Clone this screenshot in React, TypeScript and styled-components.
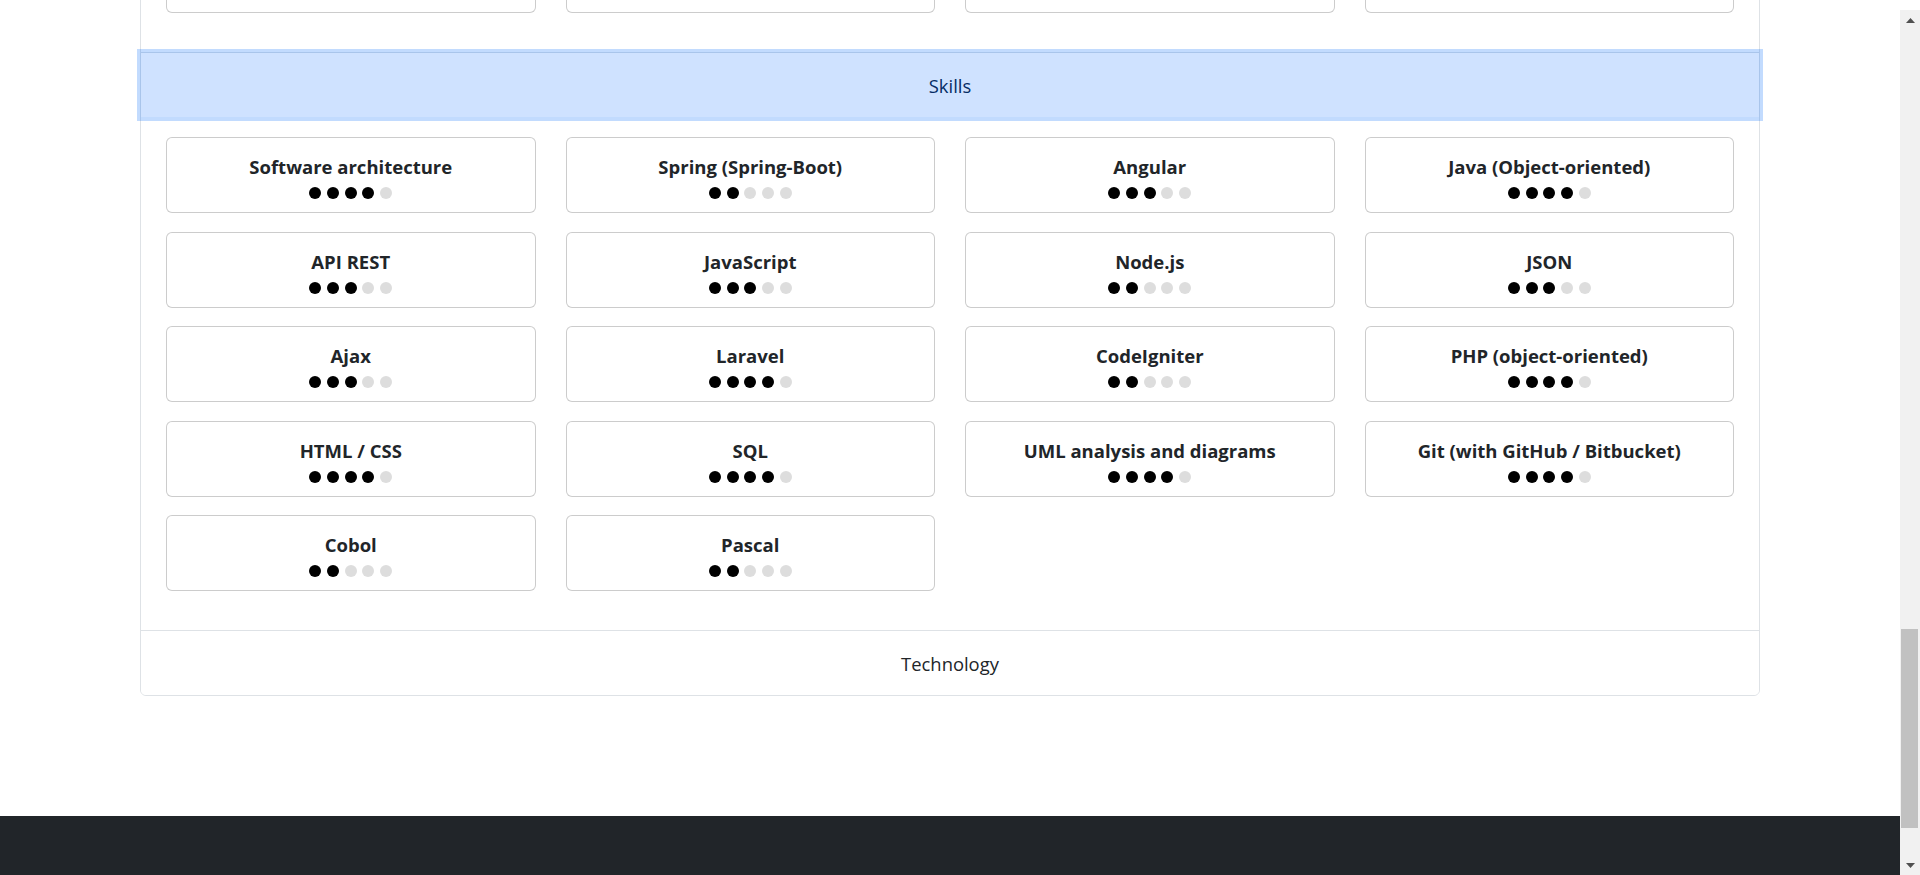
import React from 'react';
import styled, { createGlobalStyle } from 'styled-components';

interface Skill {
  name: string;
  level: number;
}

const SKILLS: Skill[] = [
  { name: 'Software architecture', level: 4 },
  { name: 'Spring (Spring-Boot)', level: 2 },
  { name: 'Angular', level: 3 },
  { name: 'Java (Object-oriented)', level: 4 },
  { name: 'API REST', level: 3 },
  { name: 'JavaScript', level: 3 },
  { name: 'Node.js', level: 2 },
  { name: 'JSON', level: 3 },
  { name: 'Ajax', level: 3 },
  { name: 'Laravel', level: 4 },
  { name: 'CodeIgniter', level: 2 },
  { name: 'PHP (object-oriented)', level: 4 },
  { name: 'HTML / CSS', level: 4 },
  { name: 'SQL', level: 4 },
  { name: 'UML analysis and diagrams', level: 4 },
  { name: 'Git (with GitHub / Bitbucket)', level: 4 },
  { name: 'Cobol', level: 2 },
  { name: 'Pascal', level: 2 },
];

const MAX_LEVEL = 5;

const GlobalStyle = createGlobalStyle`
  html, body {
    margin: 0;
    padding: 0;
    height: 100%;
    overflow: hidden;
    background: #fff;
  }

  body {
    font-family: "Open Sans", "Noto Sans", "Liberation Sans", sans-serif;
    color: #212529;
  }

  *, *::before, *::after {
    box-sizing: border-box;
  }
`;

const Screen = styled.div`
  display: flex;
  height: 875px;
`;

const Main = styled.main`
  flex: 1;
  min-width: 0;
  display: flex;
  flex-direction: column;
  overflow: hidden;
`;

// the page is scrolled down: the accordion starts above the window
const Accordion = styled.div`
  flex-shrink: 0;
  margin: -84px 140px 120px;
  border: 1px solid #dee2e6;
  border-radius: 6px;
`;

const Item = styled.section`
  & + & {
    border-top: 1px solid #dee2e6;
  }
`;

const HeaderButton = styled.button<{ $open?: boolean; $focused?: boolean; $last?: boolean }>`
  position: relative;
  z-index: ${(p) => (p.$focused ? 3 : 'auto')};
  display: flex;
  align-items: center;
  justify-content: center;
  width: 100%;
  height: 64px;
  margin: 0;
  padding: 0 20px;
  border: 0;
  border-radius: ${(p) => (p.$last ? '0 0 5px 5px' : '0')};
  font-family: inherit;
  font-size: 18.4px;
  font-weight: 400;
  background: ${(p) => (p.$open ? '#cfe2ff' : '#fff')};
  color: ${(p) => (p.$open ? '#052c65' : '#212529')};
  box-shadow: ${(p) => (p.$focused ? '0 0 0 4px rgba(13, 110, 253, 0.25)' : 'none')};
  cursor: pointer;
  outline: none;
`;

const Body = styled.div`
  padding: 20px 25px 39px;
`;

const Grid = styled.div`
  display: grid;
  grid-template-columns: repeat(4, minmax(0, 1fr));
  column-gap: 30px;
  row-gap: 18.5px;
`;

const SkillCard = styled.div`
  height: 76px;
  padding: 17px 12px 0;
  border: 1px solid rgba(0, 0, 0, 0.2);
  border-radius: 6px;
  text-align: center;
  background: #fff;
`;

const SkillName = styled.div`
  font-size: 18.5px;
  font-weight: 700;
  line-height: 24px;
  color: #212529;
  white-space: nowrap;
`;

const Dots = styled.div`
  display: flex;
  justify-content: center;
  gap: 5.7px;
  margin-top: 8px;
`;

const Dot = styled.span<{ $on: boolean }>`
  width: 12px;
  height: 12px;
  border-radius: 50%;
  background: ${(p) => (p.$on ? '#000' : '#ddd')};
`;

const Footer = styled.footer`
  flex-shrink: 0;
  height: 200px;
  background: #212529;
`;

const ScrollBar = styled.div`
  flex-shrink: 0;
  width: 20px;
  display: flex;
  flex-direction: column;
  padding-top: 10px;
  background: #fff;
`;

const Track = styled.div`
  flex: 1;
  display: flex;
  flex-direction: column;
  background: #f1f1f1;
`;

const ArrowButton = styled.div`
  height: 20px;
  display: flex;
  align-items: center;
  justify-content: center;
  color: #505050;
`;

const Rail = styled.div`
  flex: 1;
  display: flex;
  flex-direction: column;
  justify-content: flex-end;
  padding: 0 2px 27px 1px;
`;

const Thumb = styled.div`
  height: 199px;
  background: #c1c1c1;
`;

function Arrow({ down }: { down?: boolean }) {
  return (
    <svg width="9" height="5" viewBox="0 0 9 5" aria-hidden="true">
      <polygon points={down ? '0,0 9,0 4.5,5' : '4.5,0 9,5 0,5'} fill="currentColor" />
    </svg>
  );
}

function Rating({ level }: { level: number }) {
  return (
    <Dots>
      {Array.from({ length: MAX_LEVEL }, (_, i) => (
        <Dot key={i} $on={i < level} />
      ))}
    </Dots>
  );
}

export default function App() {
  return (
    <>
      <GlobalStyle />
      <Screen>
        <Main>
          <Accordion>
            <Item>
              <Body>
                <Grid>
                  {[0, 1, 2, 3].map((i) => (
                    <SkillCard key={i} />
                  ))}
                </Grid>
              </Body>
            </Item>
            <Item>
              <HeaderButton $open $focused>
                Skills
              </HeaderButton>
              <Body>
                <Grid>
                  {SKILLS.map((skill) => (
                    <SkillCard key={skill.name}>
                      <SkillName>{skill.name}</SkillName>
                      <Rating level={skill.level} />
                    </SkillCard>
                  ))}
                </Grid>
              </Body>
            </Item>
            <Item>
              <HeaderButton $last>Technology</HeaderButton>
            </Item>
          </Accordion>
          <Footer />
        </Main>
        <ScrollBar>
          <Track>
            <ArrowButton>
              <Arrow />
            </ArrowButton>
            <Rail>
              <Thumb />
            </Rail>
            <ArrowButton>
              <Arrow down />
            </ArrowButton>
          </Track>
        </ScrollBar>
      </Screen>
    </>
  );
}
